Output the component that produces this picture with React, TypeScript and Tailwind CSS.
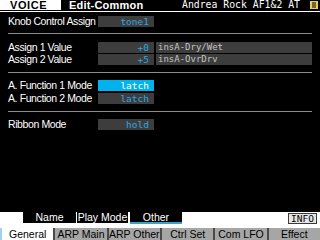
import React from "react";

const sans = { fontFamily: '"Liberation Sans", Arial, sans-serif' };
const mono = { fontFamily: '"DejaVu Sans Mono", "Liberation Mono", monospace' };

type RowProps = {
  label: string;
  value: string;
  extra?: string;
  active?: boolean;
  className?: string;
};

const Row = ({ label, value, extra, active, className }: RowProps) => (
  <div className={`flex items-center h-[11px] ${className ?? ""}`}>
    <div className="w-[90px] text-[10.5px] tracking-[-0.4px] text-white leading-none" style={sans}>
      {label}
    </div>
    <div
      className={`w-[56px] h-full flex items-center justify-end pr-[5px] text-[9.5px] leading-none ${
        active ? "bg-[#00b2ee] text-white" : "bg-[#3d3d3d] text-[#2ea6e0]"
      }`}
      style={mono}
    >
      {value}
    </div>
    {extra ? (
      <div
        className="ml-[2px] w-[156px] h-full flex items-center pl-[2px] text-[9px] leading-none bg-[#3d3d3d] text-[#c4c4c4]"
        style={mono}
      >
        {extra}
      </div>
    ) : null}
  </div>
);

const Divider = ({ className }: { className?: string }) => (
  <div className={`h-px w-[304px] bg-[#8c8c8c] ${className ?? ""}`} />
);

const bottomTabs = ["General", "ARP Main", "ARP Other", "Ctrl Set", "Com LFO", "Effect"];

const App = () => {
  return (
    <div className="w-[320px] h-[240px] bg-black flex flex-col overflow-hidden" style={sans}>
      {/* header */}
      <div className="h-[10px] flex items-stretch">
        <div className="w-[61px] bg-white flex items-center pl-[10px] text-[11px] font-bold tracking-[0.6px] text-black leading-none">
          VOICE
        </div>
        <div className="ml-[8px] flex items-center text-[11px] font-bold tracking-[0.2px] text-white leading-none">
          Edit-Common
        </div>
        <div className="ml-auto flex items-center text-[9.8px] text-white leading-none" style={mono}>
          Andrea Rock AF1&amp;2 AT
        </div>
        <div className="ml-[10px] mr-[2px] flex items-center">
          <svg width="8" height="8" viewBox="0 0 8 8">
            <rect x="0" y="0" width="8" height="8" fill="#e6cf5a" />
            <rect x="2" y="1.5" width="4" height="1" fill="#000" />
            <rect x="2" y="3.5" width="4" height="1" fill="#000" />
            <rect x="2" y="5.5" width="4" height="1" fill="#000" />
          </svg>
        </div>
      </div>
      <div className="h-px bg-white mt-px" />

      {/* parameters */}
      <div className="px-[8px] flex flex-col">
        <Row label="Knob Control Assign" value="tone1" className="mt-[4px]" />
        <Divider className="mt-[6px]" />
        <Row label="Assign 1 Value" value="+0" extra="insA-Dry/Wet" className="mt-[8px]" />
        <Row label="Assign 2 Value" value="+5" extra="insA-OvrDrv" className="mt-px" />
        <Divider className="mt-[7px]" />
        <Row label="A. Function 1 Mode" value="latch" active className="mt-[7px]" />
        <Row label="A. Function 2 Mode" value="latch" className="mt-[2px]" />
        <Divider className="mt-[7px]" />
        <Row label="Ribbon Mode" value="hold" className="mt-[7px]" />
      </div>

      <div className="flex-1" />

      {/* sub tabs */}
      <div className="h-[16px] bg-white flex items-start">
        <div className="ml-[23px] w-[53px] h-[11px] bg-black text-white text-[10.5px] leading-none flex items-center justify-center">
          Name
        </div>
        <div className="ml-px w-[51px] h-[11px] bg-black text-white text-[10.5px] leading-none flex items-center justify-center">
          Play Mode
        </div>
        <div className="ml-[2px] w-[52px] h-[12px] bg-black text-white text-[10.5px] leading-none flex items-center justify-center border-b-2 border-[#3aa2c8]">
          Other
        </div>
        <div
          className="ml-auto mr-[3px] mt-px h-[11px] px-[2px] bg-[#e6e6e6] border border-[#3a3a3a] text-black text-[9.5px] leading-none flex items-center"
          style={mono}
        >
          INFO
        </div>
      </div>

      {/* main tabs */}
      <div className="h-[12px] flex">
        {bottomTabs.map((t, i) => (
          <div
            key={t}
            className={`flex-1 flex items-center justify-center text-[10.5px] leading-none text-black ${
              i === 0
                ? "bg-white border-l-2 border-[#9fd3ee]"
                : "bg-[#a6a6a6] border-l-2 border-[#4a4a4a]"
            }`}
          >
            {t}
          </div>
        ))}
      </div>
    </div>
  );
};

export default App;
